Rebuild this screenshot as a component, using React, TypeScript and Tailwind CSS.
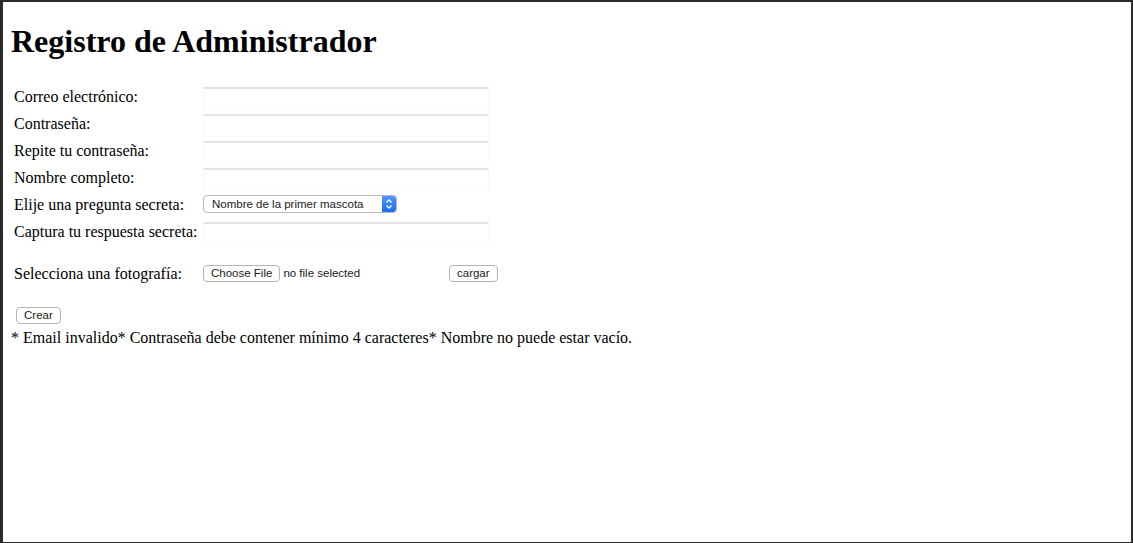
import React from "react";

const serif = { fontFamily: '"Liberation Serif", "Times New Roman", serif' };

function TextRow({ label, type = "text" }: { label: string; type?: string }) {
  return (
    <div className="flex h-[27px] items-start">
      <label className="mt-[2px] w-[189px] text-[16px] leading-[18px] whitespace-nowrap">{label}</label>
      <input
        type={type}
        className="mt-[1px] h-[23px] w-[286px] border-x border-b border-t-2 border-x-[#f8f8f8] border-b-[#fbfbfb] border-t-[#e4e4e4] bg-white outline-none"
      />
    </div>
  );
}

function SmallButton({ children, className = "" }: { children: React.ReactNode; className?: string }) {
  return (
    <button
      className={`h-[17px] rounded-[4px] border border-[#b5b5b5] bg-white px-[7px] text-[11.5px] leading-[15px] text-[#1a1a1a] ${className}`}
      style={{ fontFamily: '"Liberation Sans", Arial, sans-serif' }}
    >
      {children}
    </button>
  );
}

export default function App() {
  return (
    <div
      className="box-border h-[543px] w-full border-b border-l-[3px] border-r-2 border-t-2 border-[#2a2a2a] bg-white pl-[8px] pt-[21px] text-black"
      style={serif}
    >
      <h1 className="text-[32px] font-bold leading-[36px]">Registro de Administrador</h1>

      <form className="mt-[27px] pl-[3px]">
        <TextRow label="Correo electrónico:" type="email" />
        <TextRow label="Contraseña:" type="password" />
        <TextRow label="Repite tu contraseña:" type="password" />
        <TextRow label="Nombre completo:" />

        <div className="flex h-[27px] items-start">
          <label className="mt-[2px] w-[189px] text-[16px] leading-[18px] whitespace-nowrap">
            Elije una pregunta secreta:
          </label>
          <div
            className="mt-[1px] flex h-[18px] w-[194px] overflow-hidden rounded-[4px] border border-[#b9b9b9] bg-white"
            style={{ fontFamily: '"Liberation Sans", Arial, sans-serif' }}
          >
            <span className="flex-1 pl-[8px] text-[11.5px] leading-[16px] text-[#1a1a1a]">
              Nombre de la primer mascota
            </span>
            <span className="flex w-[14px] items-center justify-center bg-gradient-to-b from-[#4b95fb] to-[#166ff0]">
              <svg width="8" height="12" viewBox="0 0 8 12" fill="none" stroke="white" strokeWidth="1.4">
                <path d="M1.5 4.5 L4 2 L6.5 4.5" />
                <path d="M1.5 7.5 L4 10 L6.5 7.5" />
              </svg>
            </span>
          </div>
        </div>

        <TextRow label="Captura tu respuesta secreta:" />

        <div className="mt-[12px] flex h-[27px] items-center">
          <label className="w-[189px] text-[16px] leading-[18px] whitespace-nowrap">Selecciona una fotografía:</label>
          <div className="flex w-[246px] items-center">
            <SmallButton>Choose File</SmallButton>
            <span
              className="ml-[3px] text-[11.5px] text-[#1a1a1a]"
              style={{ fontFamily: '"Liberation Sans", Arial, sans-serif' }}
            >
              no file selected
            </span>
          </div>
          <SmallButton>cargar</SmallButton>
        </div>
      </form>

      <div className="mt-[15px] pl-[5px]">
        <SmallButton>Crear</SmallButton>
      </div>
      <p className="mt-[3px] text-[16px] leading-[18px]">
        * Email invalido* Contraseña debe contener mínimo 4 caracteres* Nombre no puede estar vacío.
      </p>
    </div>
  );
}
